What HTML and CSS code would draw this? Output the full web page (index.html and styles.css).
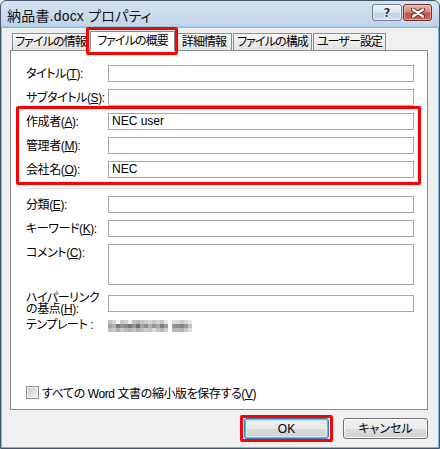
FILE: index.html
```html
<!DOCTYPE html>
<html lang="ja">
<head>
<meta charset="utf-8">
<link rel="stylesheet" href="styles.css">
</head>
<body>
<div class="window">
  <div class="titlebar">
    <span class="title">納品書.docx プロパティ</span>
    <div class="caption-btns">
      <div class="cbtn help"><span>?</span></div>
      <div class="cbtn close">
        <svg width="14" height="10" viewBox="0 0 14 10">
          <path d="M2 1.5 L12 8.5 M12 1.5 L2 8.5" stroke="#5a2620" stroke-width="4.2" stroke-linecap="round"/>
          <path d="M2 1.5 L12 8.5 M12 1.5 L2 8.5" stroke="#ffffff" stroke-width="2.4" stroke-linecap="round"/>
        </svg>
      </div>
    </div>
  </div>
  <div class="client">
    <div class="tabs">
      <div class="tab w1">ファイルの情報</div>
      <div class="tab w2 active">ファイルの概要</div>
      <div class="tab w3">詳細情報</div>
      <div class="tab w4">ファイルの構成</div>
      <div class="tab w5">ユーザー設定</div>
    </div>
    <div class="panel">
      <div class="row first"><div class="label">タイトル(<u>T</u>):</div><div class="input"></div></div>
      <div class="row"><div class="label">サブタイトル(<u>S</u>):</div><div class="input"></div></div>
      <div class="row"><div class="label">作成者(<u>A</u>):</div><div class="input">NEC user</div></div>
      <div class="row"><div class="label">管理者(<u>M</u>):</div><div class="input"></div></div>
      <div class="row"><div class="label">会社名(<u>O</u>):</div><div class="input">NEC</div></div>
      <div class="sep"></div>
      <div class="row after-sep"><div class="label">分類(<u>E</u>):</div><div class="input"></div></div>
      <div class="row"><div class="label">キーワード(<u>K</u>):</div><div class="input"></div></div>
      <div class="row tall"><div class="label">コメント(<u>C</u>):</div><div class="input"></div></div>
      <div class="row link"><div class="label two"><div class="ln">ハイパーリンク</div><div class="ln">の基点(<u>H</u>):</div></div><div class="input"></div></div>
      <div class="row tpl"><div class="label">テンプレート :</div>
        <svg class="mosaic" width="84" height="12" viewBox="0 0 84 12">
          <g>
            <rect x="0" y="0" width="4" height="4" fill="#c4c4c4"/><rect x="4" y="0" width="4" height="4" fill="#d4d4d4"/><rect x="8" y="0" width="4" height="4" fill="#f6f6f6"/><rect x="12" y="0" width="4" height="4" fill="#c6c6c6"/><rect x="16" y="0" width="4" height="4" fill="#cfcfcf"/><rect x="20" y="0" width="4" height="4" fill="#ececec"/><rect x="24" y="0" width="4" height="4" fill="#c0c0c0"/><rect x="28" y="0" width="4" height="4" fill="#b8b8b8"/><rect x="32" y="0" width="4" height="4" fill="#c6c6c6"/><rect x="36" y="0" width="4" height="4" fill="#cecece"/><rect x="40" y="0" width="4" height="4" fill="#d8d8d8"/><rect x="44" y="0" width="4" height="4" fill="#c4c4c4"/><rect x="48" y="0" width="4" height="4" fill="#d2d2d2"/><rect x="52" y="0" width="4" height="4" fill="#c2c2c2"/><rect x="56" y="0" width="4" height="4" fill="#e8e8e8"/><rect x="60" y="0" width="4" height="4" fill="#ffffff"/><rect x="64" y="0" width="4" height="4" fill="#dedede"/><rect x="68" y="0" width="4" height="4" fill="#d8d8d8"/><rect x="72" y="0" width="4" height="4" fill="#cccccc"/><rect x="76" y="0" width="4" height="4" fill="#d6d6d6"/><rect x="80" y="0" width="4" height="4" fill="#eaeaea"/>
          </g>
          <g>
            <rect x="0" y="4" width="4" height="4" fill="#a2a2a2"/><rect x="4" y="4" width="4" height="4" fill="#b0b0b0"/><rect x="8" y="4" width="4" height="4" fill="#7c7c7c"/><rect x="12" y="4" width="4" height="4" fill="#939393"/><rect x="16" y="4" width="4" height="4" fill="#8a8a8a"/><rect x="20" y="4" width="4" height="4" fill="#7a7a7a"/><rect x="24" y="4" width="4" height="4" fill="#979797"/><rect x="28" y="4" width="4" height="4" fill="#707070"/><rect x="32" y="4" width="4" height="4" fill="#a6a6a6"/><rect x="36" y="4" width="4" height="4" fill="#8d8d8d"/><rect x="40" y="4" width="4" height="4" fill="#b4b4b4"/><rect x="44" y="4" width="4" height="4" fill="#919191"/><rect x="48" y="4" width="4" height="4" fill="#aaaaaa"/><rect x="52" y="4" width="4" height="4" fill="#7f7f7f"/><rect x="56" y="4" width="4" height="4" fill="#9a9a9a"/><rect x="60" y="4" width="4" height="4" fill="#ffffff"/><rect x="64" y="4" width="4" height="4" fill="#939393"/><rect x="68" y="4" width="4" height="4" fill="#8c8c8c"/><rect x="72" y="4" width="4" height="4" fill="#848484"/><rect x="76" y="4" width="4" height="4" fill="#999999"/><rect x="80" y="4" width="4" height="4" fill="#c2c2c2"/>
          </g>
          <g>
            <rect x="0" y="8" width="4" height="4" fill="#bcbcbc"/><rect x="4" y="8" width="4" height="4" fill="#cacaca"/><rect x="8" y="8" width="4" height="4" fill="#b0b0b0"/><rect x="12" y="8" width="4" height="4" fill="#c8c8c8"/><rect x="16" y="8" width="4" height="4" fill="#b9b9b9"/><rect x="20" y="8" width="4" height="4" fill="#b6b6b6"/><rect x="24" y="8" width="4" height="4" fill="#c6c6c6"/><rect x="28" y="8" width="4" height="4" fill="#b2b2b2"/><rect x="32" y="8" width="4" height="4" fill="#bfbfbf"/><rect x="36" y="8" width="4" height="4" fill="#cdcdcd"/><rect x="40" y="8" width="4" height="4" fill="#c6c6c6"/><rect x="44" y="8" width="4" height="4" fill="#d8d8d8"/><rect x="48" y="8" width="4" height="4" fill="#c4c4c4"/><rect x="52" y="8" width="4" height="4" fill="#b8b8b8"/><rect x="56" y="8" width="4" height="4" fill="#cccccc"/><rect x="60" y="8" width="4" height="4" fill="#ffffff"/><rect x="64" y="8" width="4" height="4" fill="#b6b6b6"/><rect x="68" y="8" width="4" height="4" fill="#bbbbbb"/><rect x="72" y="8" width="4" height="4" fill="#b0b0b0"/><rect x="76" y="8" width="4" height="4" fill="#c6c6c6"/><rect x="80" y="8" width="4" height="4" fill="#dcdcdc"/>
          </g>
        </svg>
      </div>
      <div class="check-row"><span class="checkbox"></span><span class="check-label">すべての Word 文書の縮小版を保存する(<u>V</u>)</span></div>
    </div>
    <div class="buttons">
      <div class="btn default">OK</div>
      <div class="btn">キャンセル</div>
    </div>
  </div>
  <div class="mark mark-tab"></div>
  <div class="mark mark-fields"></div>
  <div class="mark mark-ok"></div>
</div>
</body>
</html>
```
FILE: styles.css
```css
* { box-sizing: border-box; }
html, body { margin: 0; padding: 0; background: #ffffff; }
body {
  font-family: "Liberation Sans", "Noto Sans CJK JP", sans-serif;
  font-size: 12px;
  color: #000;
  font-feature-settings: "palt";
  letter-spacing: -0.4px;
}
.window {
  position: relative;
  width: 440px;
  height: 449px;
  border: 1px solid #44566b;
  border-radius: 6px 6px 0 0;
  background: linear-gradient(#d6e3f1 0px, #c2d4e9 25px, #6fbbe8 26px, #6fbbe8 100%);
  display: flex;
  flex-direction: column;
  overflow: hidden;
}
.titlebar {
  height: 26px;
  display: flex;
  align-items: center;
  padding: 0 7px 0 6px;
}
.title {
  font-size: 14px;
  letter-spacing: 0.2px;
  color: #111;
  flex: 1;
  white-space: nowrap;
  padding-top: 1px;
}
.caption-btns {
  display: flex;
  gap: 1px;
  align-self: flex-start;
  margin-top: 3px;
}
.cbtn {
  height: 17px;
  border-radius: 3px;
  display: flex;
  align-items: center;
  justify-content: center;
}
.cbtn.help {
  width: 30px;
  border: 1px solid #6a7d92;
  background: linear-gradient(#eef3f9 0%, #dbe5f0 45%, #c3d2e2 55%, #cfdceb 100%);
  box-shadow: inset 0 0 0 1px rgba(255,255,255,0.6);
}
.cbtn.help span {
  font-family: "DejaVu Sans", sans-serif;
  font-weight: bold;
  font-size: 12px;
  color: #2a3d55;
  text-shadow: 0 0 1px #fff, 1px 0 0 #fff, -1px 0 0 #fff, 0 1px 0 #fff;
  line-height: 1;
  letter-spacing: 0;
}
.cbtn.close {
  width: 29px;
  border: 1px solid #6b2f28;
  background: linear-gradient(#e8b2a8 0%, #d88c80 45%, #c24e40 55%, #cf6a58 100%);
  box-shadow: inset 0 0 0 1px rgba(255,220,210,0.5);
}
.client {
  flex: 1;
  margin: 0 1px 1px 1px;
  background: #f0f0f0;
  border-top: 1px solid #a6b6c8;
  padding: 3px 10px 0 8px;
  display: flex;
  flex-direction: column;
}
.tabs {
  display: flex;
  align-items: flex-end;
  gap: 1px;
  height: 19px;
  padding-left: 2px;
}
.tab {
  height: 17px;
  border: 1px solid #898c95;
  border-bottom: none;
  background: linear-gradient(#f6f6f6, #e4e4e4);
  font-size: 12px;
  letter-spacing: -0.9px;
  line-height: 15px;
  text-align: center;
  white-space: nowrap;
  overflow: hidden;
  padding-top: 1px;
}
.tab.active {
  height: 20px;
  margin-bottom: -1px;
  background: #ffffff;
  position: relative;
  z-index: 1;
  padding-top: 2px;
}
.w1 { width: 77px; }
.w2 { width: 85px; }
.w3 { width: 56px; }
.w4 { width: 79px; }
.w5 { width: 73px; }
.panel {
  height: 360px;
  border: 1px solid #898c95;
  background: #ffffff;
  padding: 14px 13px 10px 15px;
  display: flex;
  flex-direction: column;
}
.row {
  display: flex;
  align-items: center;
  height: 17px;
  margin-top: 7px;
}
.row.first { margin-top: 0; }
.row.after-sep { margin-top: 7px; }
.row.tall { height: 41px; align-items: flex-start; }
.row.tall .label { padding-top: 2px; }
.row.link { margin-top: 10px; }
.row.tpl { margin-top: 6px; height: 13px; }
.label {
  width: 82px;
  flex: none;
  white-space: nowrap;
  line-height: 14px;
}
.label.two { line-height: 12px; }
.label.two .ln { height: 11px; line-height: 11px; }
.input {
  flex: 1;
  height: 100%;
  border: 1px solid #a7a7a7;
  background: #fff;
  padding-left: 3px;
  line-height: 15px;
  white-space: nowrap;
  letter-spacing: 0;
}
.mosaic { display: block; margin-top: 2px; }
.sep {
  height: 1px;
  background: #dadada;
  margin-top: 10px;
}
.check-row {
  margin-top: auto;
  display: flex;
  align-items: center;
  height: 14px;
}
.checkbox {
  width: 13px;
  height: 13px;
  border: 1px solid #8f8f8f;
  background: linear-gradient(135deg, #c8c8c8, #f6f6f6);
  box-shadow: inset 0 0 0 1px #f3f3f3;
  flex: none;
}
.check-label { margin-left: 3px; white-space: nowrap; }
.buttons {
  display: flex;
  justify-content: flex-end;
  gap: 14px;
  margin-top: 8px;
}
.btn {
  width: 85px;
  height: 21px;
  border: 1px solid #707070;
  border-radius: 3px;
  background: linear-gradient(#f2f2f2 0%, #ebebeb 50%, #dddddd 51%, #cfcfcf 100%);
  box-shadow: inset 0 0 0 1px #fbfbfb;
  display: flex;
  align-items: center;
  justify-content: center;
  line-height: 1;
  letter-spacing: 0;
}
.btn.default {
  border-color: #3c7fb1;
  box-shadow: inset 0 0 0 1px #48c6f2, inset 0 0 0 2px #c7eefc;
  background: linear-gradient(#f0f0f0 0%, #e8e8e8 50%, #dadada 51%, #cfcfcf 100%);
}
.mark {
  position: absolute;
  border: 3px solid #ff0000;
  border-radius: 2px;
  z-index: 5;
}
.mark-tab { left: 85px; top: 26px; width: 92px; height: 28px; }
.mark-fields { left: 15px; top: 105px; width: 405px; height: 79px; }
.mark-ok { left: 239px; top: 414px; width: 93px; height: 27px; }
```
